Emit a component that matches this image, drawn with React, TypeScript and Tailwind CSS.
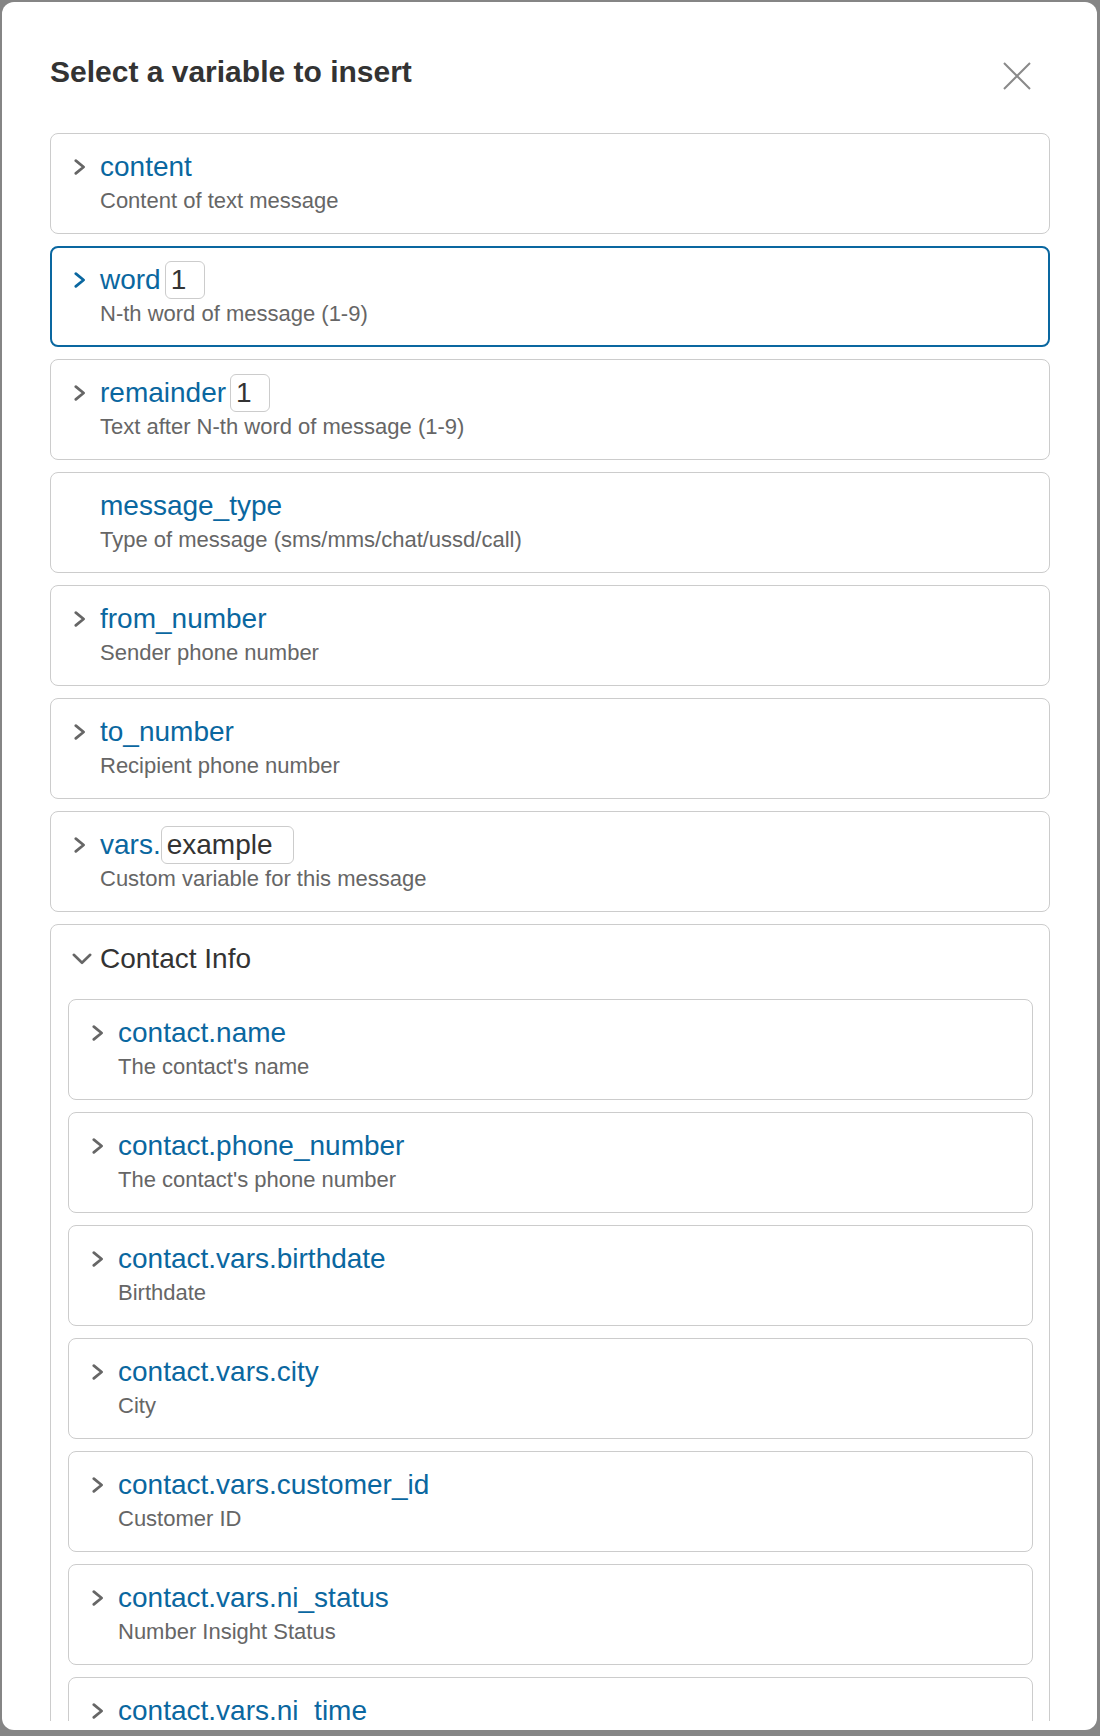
import React from "react";

type Variable = {
  name: string;
  description: string;
  expandable?: boolean;
  selected?: boolean;
  input?: { value: string; className: string };
};

const topVariables: Variable[] = [
  { name: "content", description: "Content of text message", expandable: true },
  {
    name: "word",
    description: "N-th word of message (1-9)",
    expandable: true,
    selected: true,
    input: { value: "1", className: "ml-[4px] w-[40px]" },
  },
  {
    name: "remainder",
    description: "Text after N-th word of message (1-9)",
    expandable: true,
    input: { value: "1", className: "ml-[4px] w-[40px]" },
  },
  { name: "message_type", description: "Type of message (sms/mms/chat/ussd/call)" },
  { name: "from_number", description: "Sender phone number", expandable: true },
  { name: "to_number", description: "Recipient phone number", expandable: true },
  {
    name: "vars.",
    description: "Custom variable for this message",
    expandable: true,
    input: { value: "example", className: "ml-0 w-[133px]" },
  },
];

const contactVariables: Variable[] = [
  { name: "contact.name", description: "The contact's name", expandable: true },
  { name: "contact.phone_number", description: "The contact's phone number", expandable: true },
  { name: "contact.vars.birthdate", description: "Birthdate", expandable: true },
  { name: "contact.vars.city", description: "City", expandable: true },
  { name: "contact.vars.customer_id", description: "Customer ID", expandable: true },
  { name: "contact.vars.ni_status", description: "Number Insight Status", expandable: true },
  { name: "contact.vars.ni_time", description: "Number Insight Time", expandable: true },
];

const ChevronRight: React.FC<{ className?: string }> = ({ className }) => (
  <svg width="12" height="16" viewBox="0 0 12 16" fill="none" className={className}>
    <path
      d="M1.8 1.6 9.6 8 1.8 14.4"
      stroke="currentColor"
      strokeWidth="2.7"
      strokeLinecap="round"
      strokeLinejoin="round"
    />
  </svg>
);

const ChevronDown: React.FC = () => (
  <svg width="20" height="12" viewBox="0 0 20 12" fill="none" className="text-[#666666]">
    <path
      d="M1.8 1.8 10 9.8 18.2 1.8"
      stroke="currentColor"
      strokeWidth="2.6"
      strokeLinecap="round"
      strokeLinejoin="round"
    />
  </svg>
);

const VariableCard: React.FC<{ variable: Variable }> = ({ variable }) => {
  const { name, description, expandable, selected, input } = variable;
  const frame = selected
    ? "border-2 border-[#0a67a0] pl-[22px] pt-[13px] pb-[19px]"
    : "border border-[#cccccc] pl-[23px] pt-[14px] pb-[20px]";

  return (
    <div className={`flex shrink-0 rounded-[8px] bg-white ${frame}`}>
      <div className="flex h-[38px] w-[26px] shrink-0 items-center">
        {expandable && (
          <ChevronRight className={selected ? "text-[#0a67a0]" : "text-[#666666]"} />
        )}
      </div>
      <div className="flex flex-col">
        <div className="flex h-[38px] items-center text-[28px] text-[#0a67a0]">
          <span>{name}</span>
          {input && (
            <input
              readOnly
              value={input.value}
              className={`h-[38px] rounded-[6px] border border-[#cccccc] bg-white pl-[5px] text-[28px] text-[#333333] outline-none ${input.className}`}
            />
          )}
        </div>
        <div className="mt-[3px] text-[22px] leading-[24px] text-[#666666]">{description}</div>
      </div>
    </div>
  );
};

const App: React.FC = () => {
  return (
    <div className="h-[1736px] w-[1100px] bg-[#858585] pt-[2px] pr-[3px] pb-[6px] pl-[2px] font-['Liberation_Sans',Arial,sans-serif]">
      <div className="flex h-full flex-col overflow-hidden rounded-[12px] bg-white pt-[52px] pr-[47px] pb-[9px] pl-[48px]">
        {/* Header */}
        <div className="flex h-[79px] shrink-0 items-start justify-between">
          <h2 className="text-[30px] leading-[36px] font-bold text-[#333333]">
            Select a variable to insert
          </h2>
          <button className="mt-[8px] mr-[19px] text-[#8a8a8a]">
            <svg width="28" height="28" viewBox="0 0 28 28" fill="none">
              <path d="M1 1 27 27M27 1 1 27" stroke="currentColor" strokeWidth="2" />
            </svg>
          </button>
        </div>

        {/* Variable list */}
        <div className="flex min-h-0 flex-1 flex-col gap-[12px] overflow-hidden">
          {topVariables.map((v) => (
            <VariableCard key={v.name} variable={v} />
          ))}

          {/* Contact Info group */}
          <div className="shrink-0 rounded-[8px] border border-[#cccccc] pt-[15px] pr-[16px] pb-[16px] pl-[17px]">
            <div className="flex h-[38px] items-center pl-[4px]">
              <div className="flex w-[28px] shrink-0 items-center">
                <ChevronDown />
              </div>
              <span className="text-[28px] text-[#333333]">Contact Info</span>
            </div>
            <div className="mt-[21px] flex flex-col gap-[12px]">
              {contactVariables.map((v) => (
                <VariableCard key={v.name} variable={v} />
              ))}
            </div>
          </div>
        </div>
      </div>
    </div>
  );
};

export default App;
